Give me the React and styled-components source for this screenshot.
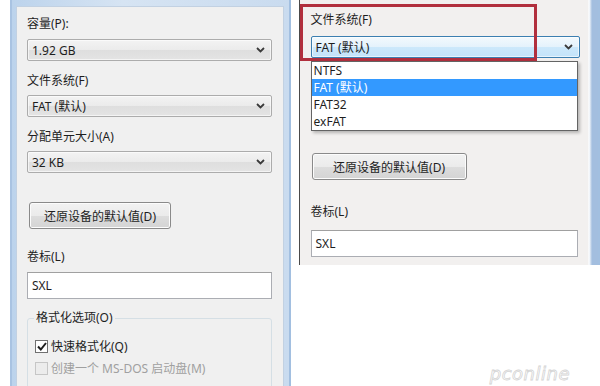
import React from "react";
import styled, { createGlobalStyle } from "styled-components";

const GlobalStyle = createGlobalStyle`
  html, body { margin: 0; padding: 0; background: #fff; }
  body {
    font-family: "Noto Sans", "Noto Sans CJK SC", sans-serif;
    font-size: 12px;
    color: #1e1e1e;
  }
`;

const Page = styled.div`
  display: flex;
  align-items: flex-start;
  width: 600px;
  height: 386px;
  overflow: hidden;
  background: #fff;
  position: relative;
`;

/* window glass around each dialog */
const Frame = styled.div`
  display: flex;
  flex-direction: column;
  box-sizing: border-box;
  background: linear-gradient(to right, #bcd3ec, #d6e4f3 40%, #c9dbef);
  border-left: 2px solid #a9c3e2;
  border-right: 2px solid #a2bfe0;
`;

const LeftFrame = styled(Frame)`
  margin-left: 10px;
  width: 281px;
  height: 400px;
  padding: 6px 5px 0 4px;
`;

const RightFrame = styled(Frame)`
  margin-left: 8px;
  width: 302px;
  height: 265px;
  border-left: 1px solid #4a4a4a;
  padding: 0 10px 0 0;
  background: linear-gradient(to right, #f2f0ef 95%, #d9dde3 96%, #fff 97%, #a3bedf 98%);
`;

const Panel = styled.div`
  position: relative;
  flex: 1;
  display: flex;
  flex-direction: column;
  align-items: flex-start;
  box-sizing: border-box;
  background: ${(p) => p.$bg || "#f0f0f0"};
  border: ${(p) => (p.$edge ? "1px solid #c2d1e2" : "none")};
  padding: ${(p) => p.$pad};
`;

const Label = styled.div`
  line-height: 16px;
  height: 16px;
  margin-top: ${(p) => p.$mt || 0}px;
  white-space: nowrap;
`;

const SelectBox = styled.div`
  display: flex;
  align-items: center;
  justify-content: space-between;
  box-sizing: border-box;
  width: ${(p) => p.$w}px;
  height: 22px;
  margin-top: ${(p) => p.$mt || 0}px;
  padding: 0 6px 0 4px;
  border: 1px solid ${(p) => (p.$open ? "#3c7fb1" : "#acacac")};
  border-radius: 2px;
  background: ${(p) =>
    p.$open
      ? "linear-gradient(#f3f9fd, #e4f2fc 50%, #cce8fb 51%, #c3e3fa)"
      : "linear-gradient(#f3f3f3, #ebebeb 50%, #dedede 51%, #e4e4e4)"};
  box-shadow: inset 0 0 0 1px rgba(255, 255, 255, 0.6);
`;

const Chevron = () => (
  <svg width="9" height="6" viewBox="0 0 9 6">
    <path d="M1 1 L4.5 4.5 L8 1" fill="none" stroke="#3a3a3a" strokeWidth="1.8" />
  </svg>
);

const Button = styled.div`
  display: flex;
  align-items: center;
  justify-content: center;
  box-sizing: border-box;
  width: ${(p) => p.$w}px;
  height: 27px;
  margin-top: ${(p) => p.$mt || 0}px;
  margin-left: ${(p) => p.$ml || 0}px;
  border: 1px solid #8a8a8a;
  border-radius: 3px;
  background: linear-gradient(#f2f2f2, #ebebeb 50%, #dddddd 51%, #d4d4d4);
  box-shadow: inset 0 0 0 1px #fcfcfc;
  white-space: nowrap;
`;

const TextBox = styled.div`
  display: flex;
  align-items: center;
  box-sizing: border-box;
  width: ${(p) => p.$w}px;
  height: 27px;
  margin-top: ${(p) => p.$mt || 0}px;
  padding-left: 4px;
  background: #fff;
  border: 1px solid #abadb3;
  border-top-color: #a0a0a0;
`;

const Group = styled.div`
  position: relative;
  box-sizing: border-box;
  width: 245px;
  height: 90px;
  margin-top: 19px;
  padding: 16px 0 0 7px;
  border: 1px solid #d5dfe5;
  border-radius: 3px;
  display: flex;
  flex-direction: column;
`;

const GroupTitle = styled.div`
  position: absolute;
  top: -9px;
  left: 6px;
  padding: 0 2px;
  background: #f0f0f0;
  line-height: 16px;
`;

const CheckRow = styled.div`
  display: flex;
  align-items: center;
  gap: 3px;
  height: 22px;
  color: ${(p) => (p.$disabled ? "#a0a0a0" : "#1e1e1e")};
`;

const Box = styled.div`
  width: 11px;
  height: 11px;
  border: 1px solid ${(p) => (p.$disabled ? "#c6c6c6" : "#707070")};
  background: ${(p) => (p.$disabled ? "#ececec" : "#fff")};
  display: flex;
  align-items: center;
  justify-content: center;
`;

const Highlight = styled.div`
  position: absolute;
  left: 0;
  top: 4px;
  width: 237px;
  height: 57px;
  box-sizing: border-box;
  border: 3px solid #b12f3d;
  pointer-events: none;
`;

const DropList = styled.div`
  position: absolute;
  left: 11px;
  top: 61px;
  width: 267px;
  box-sizing: border-box;
  background: #fff;
  border: 1px solid #646464;
  box-shadow: 2px 2px 3px rgba(0, 0, 0, 0.25);
`;

const Option = styled.div`
  height: 17px;
  line-height: 17px;
  padding-left: 2px;
  background: ${(p) => (p.$active ? "#3399ff" : "transparent")};
  color: ${(p) => (p.$active ? "#fff" : "#1e1e1e")};
`;

const Watermark = styled.div`
  position: absolute;
  right: 30px;
  bottom: 2px;
  font-family: "DejaVu Sans", sans-serif;
  font-size: 18px;
  line-height: 20px;
  font-style: italic;
  color: transparent;
  -webkit-text-stroke: 0.8px #d4d4d4;
  letter-spacing: 0.5px;
`;

const Select = ({ value, w, mt, open }) => (
  <SelectBox $w={w} $mt={mt} $open={open}>
    <span>{value}</span>
    <Chevron />
  </SelectBox>
);

const Check = ({ checked, disabled, children }) => (
  <CheckRow $disabled={disabled}>
    <Box $disabled={disabled}>
      {checked && (
        <svg width="10" height="9" viewBox="0 0 10 9">
          <path d="M1 4.5 L3.8 7.5 L9 1" fill="none" stroke="#1e1e1e" strokeWidth="2" />
        </svg>
      )}
    </Box>
    {children}
  </CheckRow>
);

const App = () => (
  <Page>
    <GlobalStyle />
    <LeftFrame>
      <Panel $edge $pad="9px 10px 0 10px">
        <Label>容量(P):</Label>
        <Select value="1.92 GB" w={245} mt={7} />
        <Label $mt={12}>文件系统(F)</Label>
        <Select value="FAT (默认)" w={245} mt={6} />
        <Label $mt={12}>分配单元大小(A)</Label>
        <Select value="32 KB" w={245} mt={6} />
        <Button $w={142} $mt={29} $ml={2}>还原设备的默认值(D)</Button>
        <Label $mt={20}>卷标(L)</Label>
        <TextBox $w={245} $mt={7}>SXL</TextBox>
        <Group>
          <GroupTitle>格式化选项(O)</GroupTitle>
          <Check checked>快速格式化(Q)</Check>
          <Check disabled>创建一个 MS-DOS 启动盘(M)</Check>
        </Group>
      </Panel>
    </LeftFrame>
    <RightFrame>
      <Panel $bg="#f2f0ef" $pad="12px 0 0 11px">
        <Label>文件系统(F)</Label>
        <Select value="FAT (默认)" w={269} mt={8} open />
        <Button $w={155} $mt={95} $ml={1}>还原设备的默认值(D)</Button>
        <Label $mt={24}>卷标(L)</Label>
        <TextBox $w={267} $mt={10}>SXL</TextBox>
        <Highlight />
        <DropList>
          <Option>NTFS</Option>
          <Option $active>FAT (默认)</Option>
          <Option>FAT32</Option>
          <Option>exFAT</Option>
        </DropList>
      </Panel>
    </RightFrame>
    <Watermark>pconline</Watermark>
  </Page>
);

export default App;
